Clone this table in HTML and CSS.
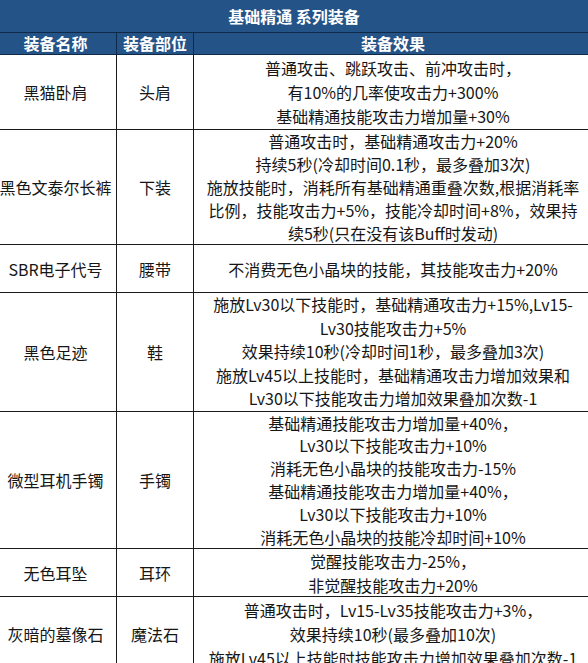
FILE: index.html
```html
<!DOCTYPE html>
<html lang="zh">
<head>
<meta charset="utf-8">
<link rel="stylesheet" href="styles.css">
</head>
<body>
<div class="sheet">
  <div class="title">基础精通 系列装备</div>
  <div class="row head">
    <div class="cell c1">装备名称</div>
    <div class="cell c2">装备部位</div>
    <div class="cell c3">装备效果</div>
  </div>
  <div class="row r1">
    <div class="cell c1">黑猫卧肩</div>
    <div class="cell c2">头肩</div>
    <div class="cell c3"><span>普通攻击、跳跃攻击、前冲攻击时，</span><span>有10%的几率使攻击力+300%</span><span>基础精通技能攻击力增加量+30%</span></div>
  </div>
  <div class="row r2">
    <div class="cell c1">黑色文泰尔长裤</div>
    <div class="cell c2">下装</div>
    <div class="cell c3"><span>普通攻击时，基础精通攻击力+20%</span><span>持续5秒(冷却时间0.1秒，最多叠加3次)</span><span>施放技能时，消耗所有基础精通重叠次数,根据消耗率</span><span>比例，技能攻击力+5%，技能冷却时间+8%，效果持</span><span>续5秒(只在没有该Buff时发动)</span></div>
  </div>
  <div class="row r3">
    <div class="cell c1">SBR电子代号</div>
    <div class="cell c2">腰带</div>
    <div class="cell c3"><span>不消费无色小晶块的技能，其技能攻击力+20%</span></div>
  </div>
  <div class="row r4">
    <div class="cell c1">黑色足迹</div>
    <div class="cell c2">鞋</div>
    <div class="cell c3"><span>施放Lv30以下技能时，基础精通攻击力+15%,Lv15-</span><span>Lv30技能攻击力+5%</span><span>效果持续10秒(冷却时间1秒，最多叠加3次)</span><span>施放Lv45以上技能时，基础精通攻击力增加效果和</span><span>Lv30以下技能攻击力增加效果叠加次数-1</span></div>
  </div>
  <div class="row r5">
    <div class="cell c1">微型耳机手镯</div>
    <div class="cell c2">手镯</div>
    <div class="cell c3"><span>基础精通技能攻击力增加量+40%，</span><span>Lv30以下技能攻击力+10%</span><span>消耗无色小晶块的技能攻击力-15%</span><span>基础精通技能攻击力增加量+40%，</span><span>Lv30以下技能攻击力+10%</span><span>消耗无色小晶块的技能冷却时间+10%</span></div>
  </div>
  <div class="row r6">
    <div class="cell c1">无色耳坠</div>
    <div class="cell c2">耳环</div>
    <div class="cell c3"><span>觉醒技能攻击力-25%，</span><span>非觉醒技能攻击力+20%</span></div>
  </div>
  <div class="row r7">
    <div class="cell c1">灰暗的墓像石</div>
    <div class="cell c2">魔法石</div>
    <div class="cell c3"><span>普通攻击时，Lv15-Lv35技能攻击力+3%，</span><span>效果持续10秒(最多叠加10次)</span><span>施放Lv45以上技能时技能攻击力增加效果叠加次数-1</span></div>
  </div>
</div>
</body>
</html>
```
FILE: styles.css
```css
html, body {
  margin: 0;
  padding: 0;
  background: #ffffff;
  overflow: hidden;
}
body {
  width: 588px;
  height: 663px;
  font-family: "Noto Sans CJK SC", "Microsoft YaHei", sans-serif;
  color: #161616;
  font-size: 16px;
}
.sheet {
  width: 598px;
  margin-left: -5px;
}
.title {
  box-sizing: border-box;
  height: 33px;
  background: #245388;
  border-bottom: 1px solid #0f2947;
  color: #ffffff;
  font-weight: bold;
  font-size: 16px;
  line-height: 32px;
  text-align: center;
}
.row {
  display: flex;
  box-sizing: border-box;
  border-bottom: 1px solid #1a1a1a;
}
.cell {
  box-sizing: border-box;
  display: flex;
  flex-direction: column;
  justify-content: center;
  align-items: center;
  text-align: center;
  line-height: 24px;
  white-space: nowrap;
  border-right: 1px solid #1a1a1a;
}
.c1 { width: 122px; }
.c2 { width: 77px; }
.c3 { width: 399px; }
.head {
  height: 22px;
  background: #245388;
  border-bottom: 1px solid #0f2947;
  color: #ffffff;
  font-weight: bold;
}
.head .cell {
  border-right-color: #0f2947;
  line-height: 21px;
}
.r1 { height: 75px; }
.r2 { height: 115px; }
.r2 .c3 { line-height: 23px; }
.r3 { height: 48px; }
.r4 { height: 119px; }
.r4 .c3 { line-height: 23.5px; }
.r5 { height: 137px; }
.r5 .c3 { line-height: 22.8px; }
.r6 { height: 48px; }
.r7 { height: 75px; }
```
